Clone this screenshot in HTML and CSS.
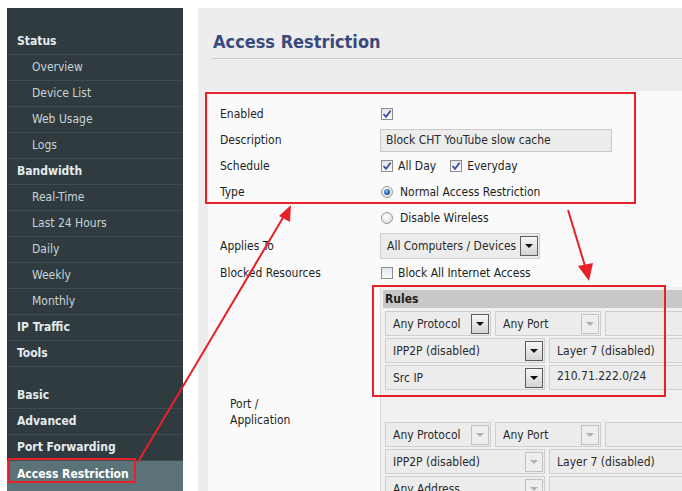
FILE: index.html
```html
<!DOCTYPE html>
<html>
<head>
<meta charset="utf-8">
<link rel="stylesheet" href="styles.css">
</head>
<body>
<div class="page">
  <nav class="side">
    <div class="item head">Status</div>
    <div class="item sub">Overview</div>
    <div class="item sub">Device List</div>
    <div class="item sub">Web Usage</div>
    <div class="item sub">Logs</div>
    <div class="item head">Bandwidth</div>
    <div class="item sub">Real-Time</div>
    <div class="item sub">Last 24 Hours</div>
    <div class="item sub">Daily</div>
    <div class="item sub">Weekly</div>
    <div class="item sub">Monthly</div>
    <div class="item head">IP Traffic</div>
    <div class="item head">Tools</div>
    <div class="spacer"></div>
    <div class="item head">Basic</div>
    <div class="item head">Advanced</div>
    <div class="item head">Port Forwarding</div>
    <div class="item head active">Access Restriction</div>
  </nav>
  <main class="main">
    <h1 class="title">Access Restriction</h1>
    <div class="content">
      <div class="form">
        <div class="lbl">Enabled</div>
        <div class="val"><span class="cb on"><svg viewBox="0 0 12 12" width="12" height="12"><path d="M2.5 6 L5 8.8 L9.6 2.8" fill="none" stroke="#3c4c98" stroke-width="1.8"/></svg></span></div>

        <div class="lbl">Description</div>
        <div class="val"><div class="textbox">Block CHT YouTube slow cache</div></div>

        <div class="lbl">Schedule</div>
        <div class="val">
          <span class="cb on"><svg viewBox="0 0 12 12" width="12" height="12"><path d="M2.5 6 L5 8.8 L9.6 2.8" fill="none" stroke="#3c4c98" stroke-width="1.8"/></svg></span><span class="cbt">All Day</span>
          <span class="cb on gap"><svg viewBox="0 0 12 12" width="12" height="12"><path d="M2.5 6 L5 8.8 L9.6 2.8" fill="none" stroke="#3c4c98" stroke-width="1.8"/></svg></span><span class="cbt">Everyday</span>
        </div>

        <div class="lbl">Type</div>
        <div class="val"><span class="rd on"></span><span class="rdt">Normal Access Restriction</span></div>

        <div class="lbl"></div>
        <div class="val"><span class="rd"></span><span class="rdt">Disable Wireless</span></div>

        <div class="lbl tall">Applies To</div>
        <div class="val tall"><div class="select wide"><span class="stext">All Computers / Devices</span><span class="btn"><i></i></span></div></div>

        <div class="lbl">Blocked Resources</div>
        <div class="val"><span class="cb"></span><span class="cbt">Block All Internet Access</span></div>

        <div class="lbl"></div>
        <div class="val block first">
          <div class="rules-head">Rules</div>
          <div class="rrow">
            <div class="sel w106"><span class="stext">Any Protocol</span><span class="btn"><i></i></span></div>
            <div class="sel w106"><span class="stext">Any Port</span><span class="btn off"><i></i></span></div>
            <div class="sel grow"></div>
          </div>
          <div class="rrow">
            <div class="sel w160"><span class="stext">IPP2P (disabled)</span><span class="btn"><i></i></span></div>
            <div class="sel grow"><span class="stext">Layer 7 (disabled)</span></div>
          </div>
          <div class="rrow">
            <div class="sel w160"><span class="stext">Src IP</span><span class="btn"><i></i></span></div>
            <div class="sel grow top"><span class="stext">210.71.222.0/24</span></div>
          </div>
        </div>

        <div class="lbl port">Port /<br>Application</div>
        <div class="val block second">
          <div class="rrow">
            <div class="sel w106"><span class="stext">Any Protocol</span><span class="btn off"><i></i></span></div>
            <div class="sel w106"><span class="stext">Any Port</span><span class="btn off"><i></i></span></div>
            <div class="sel grow"></div>
          </div>
          <div class="rrow">
            <div class="sel w160"><span class="stext">IPP2P (disabled)</span><span class="btn off"><i></i></span></div>
            <div class="sel grow"><span class="stext">Layer 7 (disabled)</span></div>
          </div>
          <div class="rrow">
            <div class="sel w160"><span class="stext">Any Address</span><span class="btn off"><i></i></span></div>
            <div class="sel grow"></div>
          </div>
        </div>
      </div>
    </div>
  </main>
  <svg class="overlay" width="682" height="491" viewBox="0 0 682 491">
    <g fill="none" stroke="#e8202a" stroke-width="2">
      <rect x="206" y="93" width="429" height="110"/>
      <rect x="373" y="286" width="292" height="110"/>
      <rect x="9" y="459" width="126" height="23"/>
      <line x1="138" y1="462" x2="284" y2="216"/>
      <line x1="568" y1="210" x2="585" y2="266"/>
    </g>
    <g fill="#e8202a">
      <polygon points="291,205 290,222 279,216"/>
      <polygon points="589,281 578,266 593,263"/>
    </g>
  </svg>
</div>
</body>
</html>
```
FILE: styles.css
```css
* { box-sizing: border-box; }
html, body { margin: 0; padding: 0; background: #ffffff; }
body {
  font-family: "DejaVu Sans Condensed", "Liberation Sans", sans-serif;
  font-size: 12px;
  color: #1e1e1e;
}
.page {
  position: relative;
  display: flex;
  gap: 15px;
  padding: 8px 0 0 7px;
  height: 491px;
  overflow: hidden;
}
.side {
  width: 176px;
  flex: none;
  background: #2f3b3f;
  padding-top: 21px;
}
.item {
  height: 26px;
  line-height: 25px;
  border-bottom: 1px solid #3f4d52;
  color: #c7d4d8;
  white-space: nowrap;
}
.item.head { padding-left: 10px; font-weight: bold; color: #e4ecef; }
.item.sub { padding-left: 25px; }
.item.active { background: #5a7278; border-bottom: none; height: 40px; color: #ffffff; line-height: 26px; }
.spacer { height: 16px; }

.main {
  flex: 1;
  background: #ededed;
  padding-top: 23px;
  display: flex;
  flex-direction: column;
  min-width: 0;
}
.title {
  margin: 0 0 32px 14px;
  padding: 0 0 5px 1px;
  font-size: 18px;
  line-height: 22px;
  font-weight: bold;
  color: #3a4a7c;
  border-bottom: 1px solid #cbcbcb;
}
.content {
  flex: 1;
  margin-left: 10px;
  background: #fafafa;
  padding: 10px 0 0 12px;
}
.form {
  display: grid;
  grid-template-columns: 160px 1fr;
}
.lbl, .val {
  height: 26px;
  display: flex;
  align-items: center;
  white-space: nowrap;
}
.lbl.tall, .val.tall { height: 29px; }

.cb {
  width: 12px; height: 12px;
  border: 1px solid #8d8d8d;
  background: linear-gradient(#e4e4e8, #fbfbfd);
  display: inline-flex;
  align-items: center;
  justify-content: center;
  margin-left: 1px;
  flex: none;
}
.cb svg { display: block; margin: -1px; }
.cb.gap { margin-left: 14px; }
.cbt { margin-left: 5px; }
.rd {
  width: 12px; height: 12px;
  border-radius: 50%;
  border: 1px solid #9a9a9a;
  background: radial-gradient(circle at 40% 35%, #ffffff, #d6d6d6);
  margin-left: 1px;
  flex: none;
  position: relative;
}
.rd.on::after {
  content: "";
  position: absolute;
  left: 2px; top: 2px;
  width: 6px; height: 6px;
  border-radius: 50%;
  background: radial-gradient(circle at 40% 35%, #8cc4f4, #1a5fb0 60%, #0c3c7c);
}
.rdt { margin-left: 7px; }

.textbox {
  width: 232px;
  height: 23px;
  background: #ececec;
  border: 1px solid #c9c9c9;
  padding-left: 5px;
  line-height: 21px;
  color: #2a2a2a;
}
.select, .sel {
  height: 26px;
  background: #ececec;
  border: 1px solid #cfcfcf;
  display: flex;
  align-items: center;
  justify-content: space-between;
  padding: 0 1px 0 6px;
  color: #2a2a2a;
  flex: none;
}
.select.wide { width: 160px; }
.btn {
  width: 18px; height: 20px;
  border: 1px solid #5c5c5c;
  background: linear-gradient(#f6f6f6, #d4d4d4);
  display: flex;
  align-items: center;
  justify-content: center;
  flex: none;
}
.btn i {
  width: 0; height: 0;
  border-left: 4px solid transparent;
  border-right: 4px solid transparent;
  border-top: 4px solid #111;
}
.btn.off { border-color: #c2c2c2; background: #eeeeee; }
.btn.off i { border-top-color: #b0b0b0; }

.val.block {
  grid-column: 2;
  height: auto;
  display: block;
  background: #f0f0f0;
  border-left: 1px solid #dcdcdc;
  padding: 3px 0 2px 2px;
}
.val.block.first { margin-top: 1px; }
.val.block.second { padding-top: 28px; height: 120px; }
.rules-head {
  height: 18px;
  line-height: 18px;
  background: #c8c8c8;
  font-weight: bold;
  padding-left: 2px;
  margin-bottom: 3px;
  color: #1e1e1e;
}
.rrow {
  display: flex;
  gap: 4px;
  margin: 0 0 2px 2px;
}
.rrow .sel { height: 25px; padding-left: 7px; }
.sel.w106 { width: 106px; }
.sel.w160 { width: 160px; }
.sel.grow { flex: 1; min-width: 200px; }
.sel.top { align-items: flex-start; padding-top: 3px; }
.lbl.port {
  height: auto;
  align-items: flex-start;
  padding-left: 10px;
  padding-top: 2px;
  line-height: 16px;
  white-space: normal;
}

.overlay {
  position: absolute;
  left: 0; top: 0;
  pointer-events: none;
}
```
